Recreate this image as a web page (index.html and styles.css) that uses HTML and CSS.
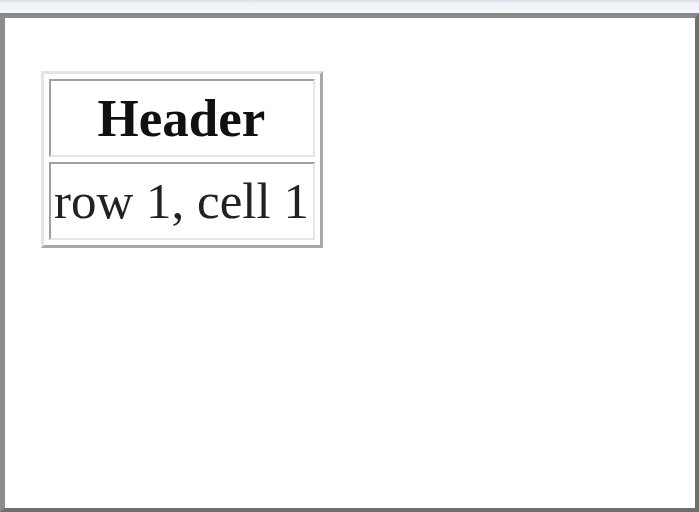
FILE: index.html
```html
<!DOCTYPE html>
<html lang="en">
<head>
    <meta charset="UTF-8">
    <meta name="viewport" content="width=device-width, initial-scale=1.0">
    <title>Table</title>
    <link rel="stylesheet" href="styles.css">
</head>
<body>
    <div class="window">
        <div class="viewport">
            <table class="demo-table">
                <tr>
                    <th>Header</th>
                </tr>
                <tr>
                    <td>row 1, cell 1</td>
                </tr>
            </table>
        </div>
    </div>
</body>
</html>
```

FILE: styles.css
```css
* {
    box-sizing: border-box;
    margin: 0;
    padding: 0;
}

html, body {
    height: 100%;
}

body {
    background-color: #fff;
    font-family: 'Liberation Serif', 'Times New Roman', serif;
    color: #1c1c1c;
}

.window {
    height: 100%;
    padding-top: 13px;
    background: linear-gradient(#d9dee6 0, #eef2f7 3px, #f4f7fb 12px);
    display: flex;
    flex-direction: column;
}

.viewport {
    flex: 1;
    background-color: #fff;
    border-top: 5px solid #8a8a8a;
    border-left: 5px solid #8c8c8c;
    border-right: 4px solid #6e6e6e;
    border-bottom: 4px solid #6e6e6e;
    padding: 53px 0 0 36px;
}

.demo-table {
    border-collapse: separate;
    border-spacing: 5px;
    border-style: solid;
    border-width: 3px;
    border-color: #e4e4e4 #a8a8a8 #a8a8a8 #e4e4e4;
}

.demo-table th,
.demo-table td {
    border-style: solid;
    border-width: 2px;
    border-color: #a0a0a0 #e6e6e6 #e6e6e6 #a0a0a0;
    padding: 5px 4px 4px 3px;
    line-height: 65px;
    text-align: center;
}

.demo-table th {
    font-size: 53px;
    font-weight: bold;
    color: #111;
}

.demo-table td {
    font-size: 51px;
    color: #222;
}
```
